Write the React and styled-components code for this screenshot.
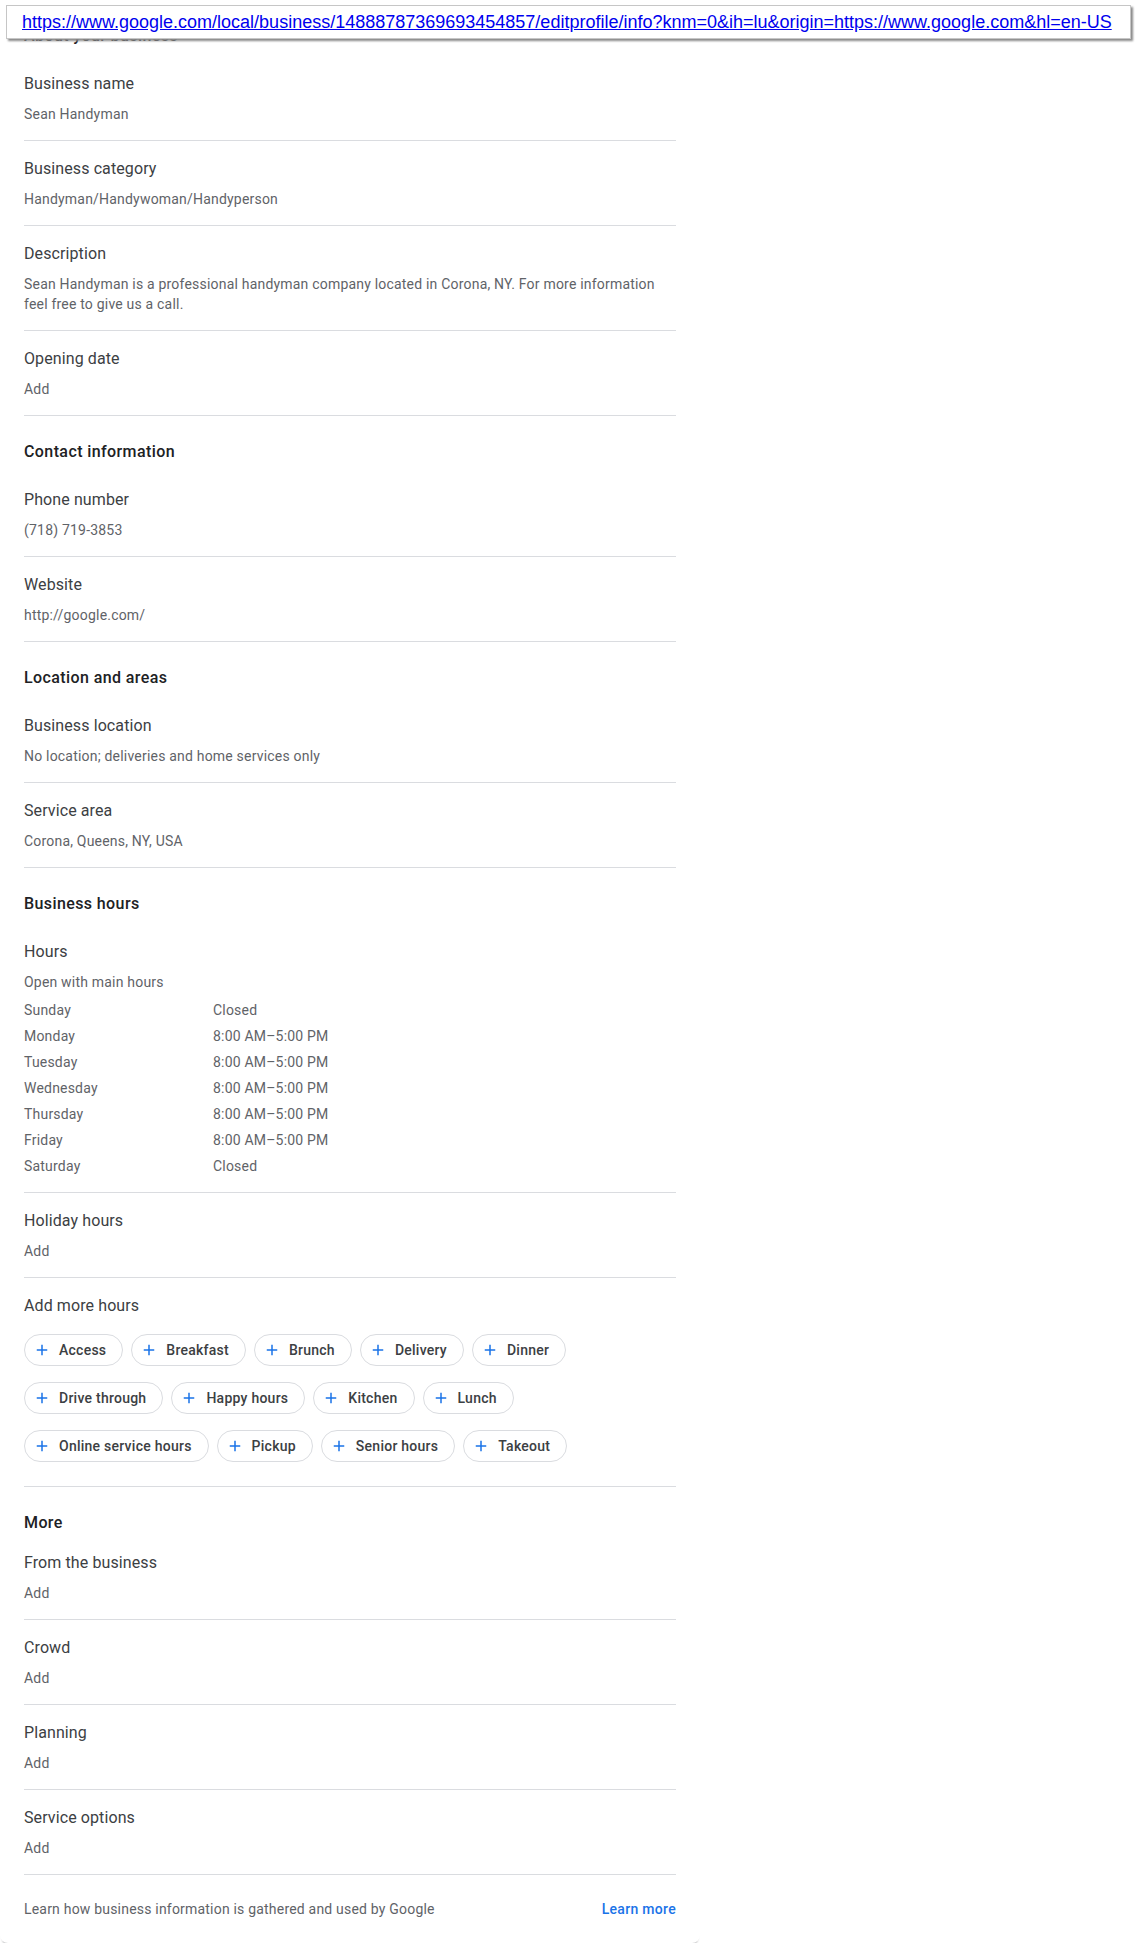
import React from "react";
import styled, { createGlobalStyle } from "styled-components";

const GlobalStyle = createGlobalStyle`
  body {
    margin: 0;
    background: #fff;
    font-family: Roboto, "Liberation Sans", Arial, sans-serif;
  }
`;

const Page = styled.div`
  position: relative;
  min-height: 1943px;
`;

const UrlBar = styled.div`
  position: absolute;
  top: 5px;
  left: 6px;
  width: 1108px;
  height: 32px;
  padding-left: 15px;
  display: flex;
  align-items: center;
  background: #fff;
  border: 1px solid #c6c6c6;
  box-shadow: 2px 2px 2px #8a8a8a;
  z-index: 2;
`;

const UrlLink = styled.a`
  font-family: "Liberation Sans", Arial, sans-serif;
  font-size: 18px;
  color: #0000ee;
  text-decoration: underline;
  white-space: nowrap;
`;

const Card = styled.div`
  width: 652px;
  padding: 0 24px;
  background: #fff;
  border-radius: 0 0 8px 8px;
  box-shadow: 0 4px 2px -2px rgba(60, 64, 67, 0.3);
`;

const SectionTitle = styled.h2`
  margin: 0;
  padding: 24px 0 ${(props) => (props.$tight ? "0" : "8px")};
  font-size: 16px;
  line-height: 24px;
  font-weight: 500;
  letter-spacing: 0.4px;
  color: #202124;
`;

const Field = styled.div`
  padding: 16px 0 ${(props) => props.$bottom || 16}px;
  border-bottom: 1px solid #dadce0;
`;

const Label = styled.div`
  font-size: 16px;
  line-height: 24px;
  letter-spacing: 0.1px;
  color: #3c4043;
`;

const Value = styled.div`
  margin-top: 8px;
  font-size: 14px;
  line-height: 20px;
  letter-spacing: 0.2px;
  color: #5f6368;
`;

const HoursGrid = styled.div`
  display: grid;
  grid-template-columns: 189px 1fr;
  row-gap: 6px;
  margin-top: 8px;
  font-size: 14px;
  line-height: 20px;
  letter-spacing: 0.2px;
  color: #5f6368;
`;

const ChipWrap = styled.div`
  display: flex;
  flex-wrap: wrap;
  gap: 16px 8px;
  margin-top: 16px;
`;

const Chip = styled.button`
  display: inline-flex;
  align-items: center;
  gap: 8px;
  height: 32px;
  padding: 0 16px 0 8px;
  background: #fff;
  border: 1px solid #dadce0;
  border-radius: 16px;
  font-family: Roboto, "Liberation Sans", Arial, sans-serif;
  font-size: 14px;
  font-weight: 500;
  letter-spacing: 0.25px;
  color: #3c4043;
  cursor: pointer;
`;

const Footer = styled.div`
  height: 68px;
  display: flex;
  align-items: center;
  justify-content: space-between;
  font-size: 14px;
  letter-spacing: 0.2px;
  color: #5f6368;
`;

const FooterLink = styled.a`
  font-weight: 500;
  letter-spacing: 0.3px;
  color: #1a73e8;
  text-decoration: none;
`;

function PlusIcon() {
  return (
    <svg width="18" height="18" viewBox="0 0 24 24" fill="#1a73e8">
      <path d="M19 13h-6v6h-2v-6H5v-2h6V5h2v6h6v2z" />
    </svg>
  );
}

const hours = [
  ["Sunday", "Closed"],
  ["Monday", "8:00 AM–5:00 PM"],
  ["Tuesday", "8:00 AM–5:00 PM"],
  ["Wednesday", "8:00 AM–5:00 PM"],
  ["Thursday", "8:00 AM–5:00 PM"],
  ["Friday", "8:00 AM–5:00 PM"],
  ["Saturday", "Closed"],
];

const moreHours = [
  "Access",
  "Breakfast",
  "Brunch",
  "Delivery",
  "Dinner",
  "Drive through",
  "Happy hours",
  "Kitchen",
  "Lunch",
  "Online service hours",
  "Pickup",
  "Senior hours",
  "Takeout",
];

function InfoField({ label, value }) {
  return (
    <Field>
      <Label>{label}</Label>
      <Value>{value}</Value>
    </Field>
  );
}

export default function App() {
  const url =
    "https://www.google.com/local/business/14888787369693454857/editprofile/info?knm=0&ih=lu&origin=https://www.google.com&hl=en-US";

  return (
    <Page>
      <GlobalStyle />
      <UrlBar>
        <UrlLink href={url}>{url}</UrlLink>
      </UrlBar>
      <Card>
        <SectionTitle>About your business</SectionTitle>
        <InfoField label="Business name" value="Sean Handyman" />
        <InfoField
          label="Business category"
          value="Handyman/Handywoman/Handyperson"
        />
        <InfoField
          label="Description"
          value="Sean Handyman is a professional handyman company located in Corona, NY. For more information feel free to give us a call."
        />
        <InfoField label="Opening date" value="Add" />

        <SectionTitle>Contact information</SectionTitle>
        <InfoField label="Phone number" value="(718) 719-3853" />
        <InfoField label="Website" value="http://google.com/" />

        <SectionTitle>Location and areas</SectionTitle>
        <InfoField
          label="Business location"
          value="No location; deliveries and home services only"
        />
        <InfoField label="Service area" value="Corona, Queens, NY, USA" />

        <SectionTitle>Business hours</SectionTitle>
        <Field>
          <Label>Hours</Label>
          <Value>Open with main hours</Value>
          <HoursGrid>
            {hours.map(([day, time]) => (
              <React.Fragment key={day}>
                <span>{day}</span>
                <span>{time}</span>
              </React.Fragment>
            ))}
          </HoursGrid>
        </Field>
        <InfoField label="Holiday hours" value="Add" />
        <Field $bottom={24}>
          <Label>Add more hours</Label>
          <ChipWrap>
            {moreHours.map((name) => (
              <Chip key={name}>
                <PlusIcon />
                {name}
              </Chip>
            ))}
          </ChipWrap>
        </Field>

        <SectionTitle $tight>More</SectionTitle>
        <InfoField label="From the business" value="Add" />
        <InfoField label="Crowd" value="Add" />
        <InfoField label="Planning" value="Add" />
        <InfoField label="Service options" value="Add" />

        <Footer>
          <span>Learn how business information is gathered and used by Google</span>
          <FooterLink href="#">Learn more</FooterLink>
        </Footer>
      </Card>
    </Page>
  );
}
